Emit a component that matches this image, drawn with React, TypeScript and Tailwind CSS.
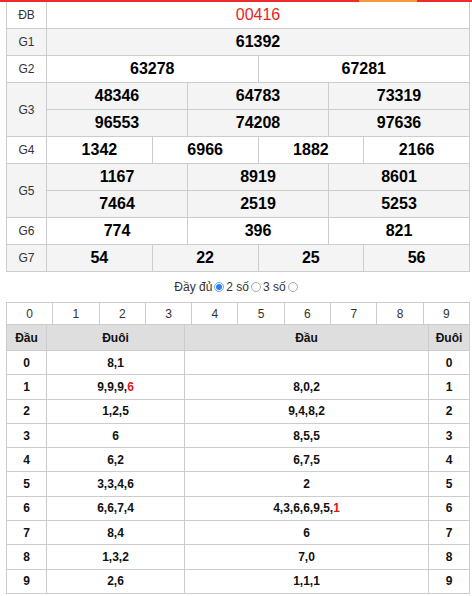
import React from 'react';

type Prize = { label: string; rows: string[][]; red?: boolean; thin?: boolean };

const prizes: Prize[] = [
  { label: 'ĐB', rows: [['00416']], red: true },
  { label: 'G1', rows: [['61392']] },
  { label: 'G2', rows: [['63278', '67281']] },
  { label: 'G3', rows: [['48346', '64783', '73319'], ['96553', '74208', '97636']] },
  { label: 'G4', rows: [['1342', '6966', '1882', '2166']] },
  { label: 'G5', rows: [['1167', '8919', '8601'], ['7464', '2519', '5253']] },
  { label: 'G6', rows: [['774', '396', '821']] },
  { label: 'G7', rows: [['54', '22', '25', '56']] },
];

const gridCols: Record<number, string> = {
  1: 'grid-cols-1',
  2: 'grid-cols-2',
  3: 'grid-cols-3',
  4: 'grid-cols-4',
};

// [đầu, đuôi list, đầu list]; the last item of a list may be red
const loto: { n: string; tail: string; tailRed?: string; head: string; headRed?: string }[] = [
  { n: '0', tail: '8,1', head: '' },
  { n: '1', tail: '9,9,9,', tailRed: '6', head: '8,0,2' },
  { n: '2', tail: '1,2,5', head: '9,4,8,2' },
  { n: '3', tail: '6', head: '8,5,5' },
  { n: '4', tail: '6,2', head: '6,7,5' },
  { n: '5', tail: '3,3,4,6', head: '2' },
  { n: '6', tail: '6,6,7,4', head: '4,3,6,6,9,5,', headRed: '1' },
  { n: '7', tail: '8,4', head: '6' },
  { n: '8', tail: '1,3,2', head: '7,0' },
  { n: '9', tail: '2,6', head: '1,1,1' },
];

function Radio({ checked }: { checked?: boolean }) {
  return checked ? (
    <span className="inline-flex items-center justify-center w-[10px] h-[10px] rounded-full border border-[#6aa6f0] bg-white mx-[2px]">
      <span className="w-[6px] h-[6px] rounded-full bg-[#2f80ed]" />
    </span>
  ) : (
    <span className="inline-block w-[10px] h-[10px] rounded-full border border-[#a8a8a8] bg-white mx-[2px]" />
  );
}

export default function App() {
  return (
    <div className="w-[472px] h-[596px] bg-white overflow-hidden font-['Liberation_Sans',Arial,sans-serif]">
      {/* top strip */}
      <div className="flex h-[2px]">
        <div className="w-[359px] bg-[#ee2a2a]" />
        <div className="w-[58px] bg-[#f39a3c]" />
        <div className="flex-1 bg-[#ee2a2a]" />
      </div>

      {/* Prize table */}
      <div className="ml-[6px] w-[464px] border-l border-[#cccccc]">
        {prizes.map((p, i) => (
          <div key={p.label} className={`flex ${i % 2 === 1 ? 'bg-[#f4f4f4]' : 'bg-white'}`}>
            <div className="w-[40px] flex items-center justify-center border-r border-b border-[#cccccc] text-[12px] text-[#333]">
              {p.label}
            </div>
            <div className="flex-1">
              {p.rows.map((r, j) => (
                <div key={j} className={`grid ${gridCols[r.length]}`}>
                  {r.map((v, k) => (
                    <div
                      key={k}
                      className={`h-[27px] flex items-center justify-center border-r border-b border-[#cccccc] text-[16px] ${
                        p.red ? 'text-[#ed1c24] font-normal' : 'text-black font-bold'
                      }`}
                    >
                      {v}
                    </div>
                  ))}
                </div>
              ))}
            </div>
          </div>
        ))}
      </div>

      {/* Display options */}
      <div className="h-[30px] flex items-center justify-center text-[12px] text-[#333] pl-[2px]">
        <span>Đầy đủ</span>
        <Radio checked />
        <span>2 số</span>
        <Radio />
        <span>3 số</span>
        <Radio />
      </div>

      {/* Loto table */}
      <div className="ml-[6px] w-[464px] border-l border-t border-[#cccccc] text-[12px]">
        <div className="grid grid-cols-10">
          {Array.from({ length: 10 }, (_, i) => (
            <div key={i} className="h-[22px] flex items-center justify-center border-r border-b border-[#cccccc] text-[#333]">
              {i}
            </div>
          ))}
        </div>
        <div className="flex h-[26px] bg-[#dedede] font-bold text-[#111]">
          <div className="w-[40px] flex items-center justify-center border-r border-b border-[#cccccc]">Đầu</div>
          <div className="w-[138px] flex items-center justify-center border-r border-b border-[#cccccc]">Đuôi</div>
          <div className="w-[244px] flex items-center justify-center border-r border-b border-[#cccccc]">Đầu</div>
          <div className="flex-1 flex items-center justify-center border-r border-b border-[#cccccc]">Đuôi</div>
        </div>
        {loto.map((row) => (
          <div key={row.n} className="flex h-[24.3px] bg-white font-bold text-[#111]">
            <div className="w-[40px] flex items-center justify-center border-r border-b border-[#cccccc]">{row.n}</div>
            <div className="w-[138px] flex items-center justify-center border-r border-b border-[#cccccc]">
              {row.tail}
              {row.tailRed && <span className="text-[#e8141c]">{row.tailRed}</span>}
            </div>
            <div className="w-[244px] flex items-center justify-center border-r border-b border-[#cccccc]">
              {row.head}
              {row.headRed && <span className="text-[#e8141c]">{row.headRed}</span>}
            </div>
            <div className="flex-1 flex items-center justify-center border-r border-b border-[#cccccc]">{row.n}</div>
          </div>
        ))}
      </div>
    </div>
  );
}
